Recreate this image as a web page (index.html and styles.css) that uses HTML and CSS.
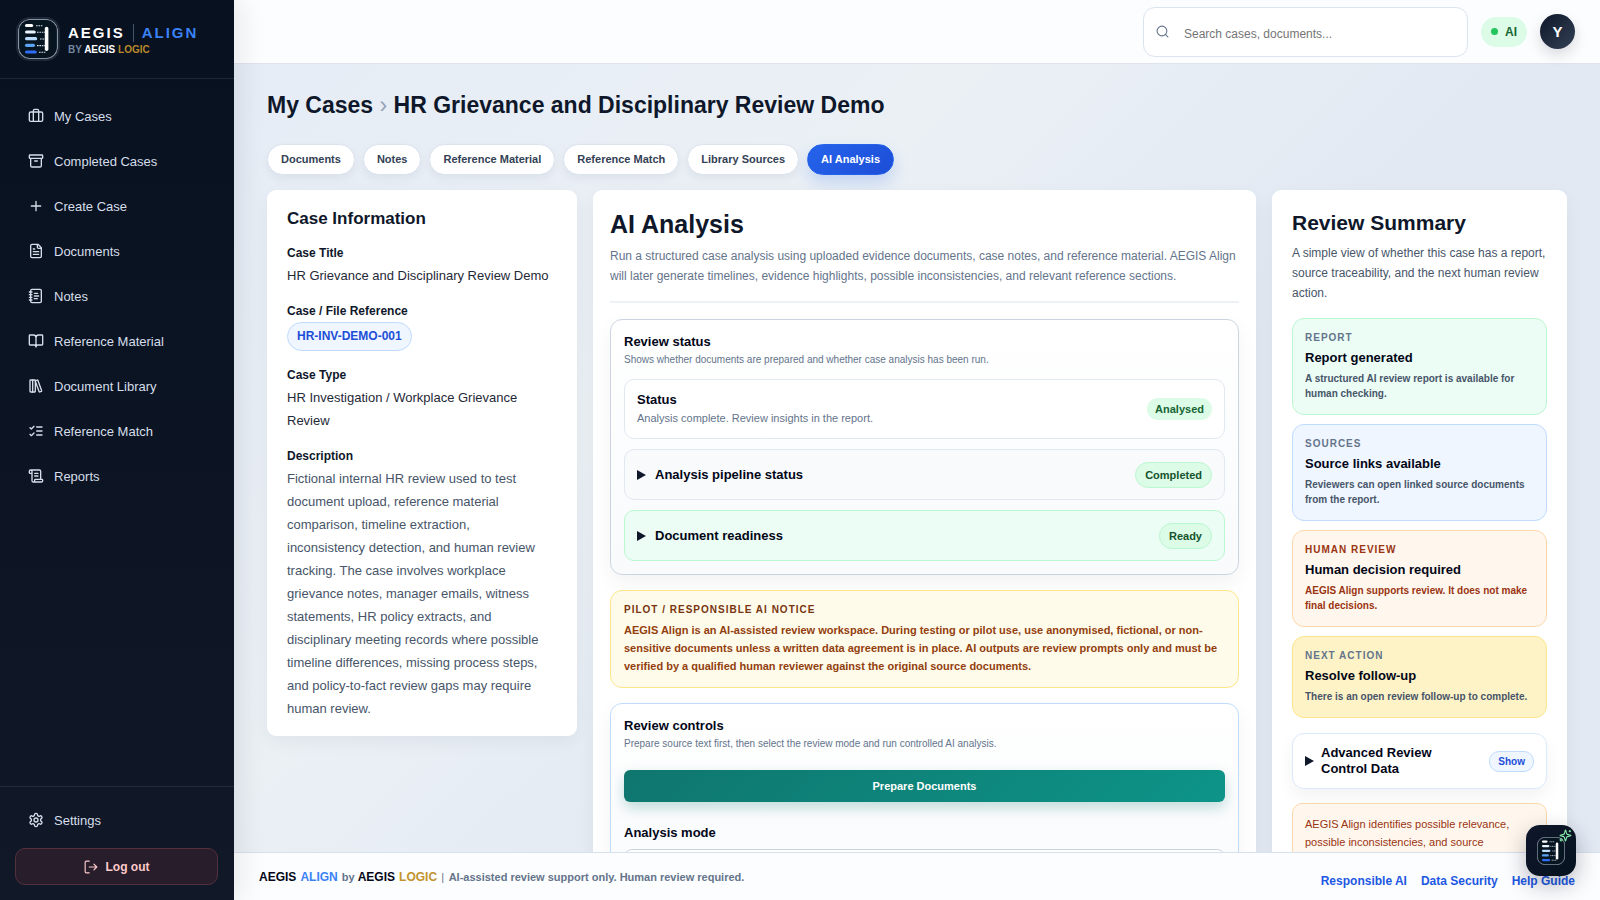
FILE: index.html
```html
<!DOCTYPE html>
<html lang="en">

<head>
    <meta charset="UTF-8">
    <meta name="viewport" content="width=device-width, initial-scale=1.0">
    <title>AEGIS Align</title>
    <link rel="stylesheet" href="styles.css">
</head>

<body>
    <!-- shared symbols -->
    <svg class="symbols" aria-hidden="true">
        <symbol id="logo" viewBox="0 0 40 40">
            <rect x="0.5" y="0.5" width="39" height="39" rx="11" fill="#071521" stroke="#8793a5" stroke-width="1.2" />
            <g stroke-width="3.2" stroke-linecap="round">
                <path d="M8.6 6.5h5" stroke="#fff" />
                <path d="M8.6 13h7.6" stroke="#e8f4ff" />
                <path d="M8.6 19.7h9" stroke="#b9dcff" />
                <path d="M8.6 26.3h6.8" stroke="#5ba4f5" />
                <path d="M8.6 33h8.6" stroke="#2f6df6" />
                <path d="M28.6 9.6v20.6" stroke="#fff" stroke-width="3.6" />
            </g>
            <g stroke="#d5e2f0" stroke-width="1.1" stroke-dasharray="1.6 0.8">
                <path d="M18 6.8h7" />
                <path d="M19 13.3h8" />
                <path d="M22 20h5" />
                <path d="M19 26.6h8" />
                <path d="M21 33.2h7" />
            </g>
        </symbol>
    </svg>

    <aside class="sidebar">
        <div class="brand">
            <svg class="brand-logo"><use href="#logo" /></svg>
            <div>
                <div class="brand-name"><span>AEGIS</span><i></i><b>ALIGN</b></div>
                <div class="brand-by">BY <span>AEGIS</span> <em>LOGIC</em></div>
            </div>
        </div>
        <nav class="nav">
            <a href="#"><svg class="icon" viewBox="0 0 24 24"><path d="M16 20V4a2 2 0 0 0-2-2h-4a2 2 0 0 0-2 2v16" /><rect x="2" y="6" width="20" height="14" rx="2" /></svg>My Cases</a>
            <a href="#"><svg class="icon" viewBox="0 0 24 24"><rect x="2" y="3" width="20" height="5" rx="1" /><path d="M4 8v11a2 2 0 0 0 2 2h12a2 2 0 0 0 2-2V8M10 12h4" /></svg>Completed Cases</a>
            <a href="#"><svg class="icon" viewBox="0 0 24 24"><path d="M5 12h14M12 5v14" /></svg>Create Case</a>
            <a href="#"><svg class="icon" viewBox="0 0 24 24"><path d="M15 2H6a2 2 0 0 0-2 2v16a2 2 0 0 0 2 2h12a2 2 0 0 0 2-2V7ZM14 2v4a2 2 0 0 0 2 2h4M10 9H8M16 13H8M16 17H8" /></svg>Documents</a>
            <a href="#"><svg class="icon" viewBox="0 0 24 24"><path d="M2 6h4M2 10h4M2 14h4M2 18h4M9.500 8h5M9.500 12H16M9.500 16H14" /><rect x="4" y="2" width="16" height="20" rx="2" /></svg>Notes</a>
            <a href="#"><svg class="icon" viewBox="0 0 24 24"><path d="M12 7v14M3 18a1 1 0 0 1-1-1V4a1 1 0 0 1 1-1h5a4 4 0 0 1 4 4 4 4 0 0 1 4-4h5a1 1 0 0 1 1 1v13a1 1 0 0 1-1 1h-6a3 3 0 0 0-3 3 3 3 0 0 0-3-3z" /></svg>Reference Material</a>
            <a href="#"><svg class="icon" viewBox="0 0 24 24"><rect x="3" y="3" width="8" height="18" rx="1" /><path d="M7 3v18M20.400 18.900c.2.5-.1 1.100-.6 1.300l-1.900.7c-.5.2-1.100-.1-1.300-.6L11.100 5.100c-.2-.5.1-1.100.6-1.300l1.900-.7c.5-.2 1.100.1 1.300.6Z" /></svg>Document Library</a>
            <a href="#"><svg class="icon" viewBox="0 0 24 24"><path d="m3 17 2 2 4-4M3 7l2 2 4-4M13 6h8M13 12h8M13 18h8" /></svg>Reference Match</a>
            <a href="#"><svg class="icon" viewBox="0 0 24 24"><path d="M15 12h-5M15 8h-5M19 17V5a2 2 0 0 0-2-2H4M8 21h12a2 2 0 0 0 2-2v-1a1 1 0 0 0-1-1H11a1 1 0 0 0-1 1v1a2 2 0 1 1-4 0V5a2 2 0 1 0-4 0v2a1 1 0 0 0 1 1h3" /></svg>Reports</a>
        </nav>
        <div class="sidebar-bottom">
            <a href="#"><svg class="icon" viewBox="0 0 24 24"><path d="M12.220 2h-.44a2 2 0 0 0-2 2v.18a2 2 0 0 1-1 1.730l-.43.25a2 2 0 0 1-2 0l-.15-.08a2 2 0 0 0-2.730.73l-.22.38a2 2 0 0 0 .73 2.730l.15.1a2 2 0 0 1 1 1.720v.51a2 2 0 0 1-1 1.740l-.15.09a2 2 0 0 0-.73 2.730l.22.38a2 2 0 0 0 2.730.73l.15-.08a2 2 0 0 1 2 0l.43.25a2 2 0 0 1 1 1.730V20a2 2 0 0 0 2 2h.44a2 2 0 0 0 2-2v-.18a2 2 0 0 1 1-1.730l.43-.25a2 2 0 0 1 2 0l.15.08a2 2 0 0 0 2.730-.73l.22-.39a2 2 0 0 0-.73-2.730l-.15-.08a2 2 0 0 1-1-1.740v-.5a2 2 0 0 1 1-1.740l.15-.09a2 2 0 0 0 .73-2.730l-.22-.38a2 2 0 0 0-2.730-.73l-.15.08a2 2 0 0 1-2 0l-.43-.25a2 2 0 0 1-1-1.730V4a2 2 0 0 0-2-2z" /><circle cx="12" cy="12" r="3" /></svg>Settings</a>
            <button class="logout" type="button"><svg class="icon" viewBox="0 0 24 24"><path d="M9 22H4a2 2 0 0 1-2-2V4a2 2 0 0 1 2-2h5M17 17l5-5-5-5M22 12H9" /></svg>Log out</button>
        </div>
    </aside>

    <div class="page">
        <header class="topbar">
            <label class="search">
                <svg class="icon" viewBox="0 0 24 24"><circle cx="11" cy="11" r="9" /><path d="m22 22-4.300-4.300" /></svg>
                <input type="search" placeholder="Search cases, documents..." aria-label="Search">
            </label>
            <span class="ai-pill">AI</span>
            <button class="avatar" type="button">Y</button>
        </header>

        <main class="content">
            <h1>My Cases <span>›</span> HR Grievance and Disciplinary Review Demo</h1>
            <nav class="tabs">
                <a href="#">Documents</a>
                <a href="#">Notes</a>
                <a href="#">Reference Material</a>
                <a href="#">Reference Match</a>
                <a href="#">Library Sources</a>
                <a href="#" class="active">AI Analysis</a>
            </nav>

            <div class="columns">
                <section class="card case-info">
                    <h2>Case Information</h2>
                    <dl>
                        <dt>Case Title</dt>
                        <dd>HR Grievance and Disciplinary Review Demo</dd>
                        <dt>Case / File Reference</dt>
                        <dd><span class="ref">HR-INV-DEMO-001</span></dd>
                        <dt>Case Type</dt>
                        <dd>HR Investigation / Workplace Grievance Review</dd>
                        <dt>Description</dt>
                        <dd class="description">Fictional internal HR review used to test document upload, reference material comparison, timeline extraction, inconsistency detection, and human review tracking. The case involves workplace grievance notes, manager emails, witness statements, HR policy extracts, and disciplinary meeting records where possible timeline differences, missing process steps, and policy-to-fact review gaps may require human review.</dd>
                    </dl>
                </section>

                <section class="card analysis">
                    <div class="analysis-head">
                        <h2>AI Analysis</h2>
                        <p>Run a structured case analysis using uploaded evidence documents, case notes, and reference material. AEGIS Align will later generate timelines, evidence highlights, possible inconsistencies, and relevant reference sections.</p>
                    </div>

                    <div class="panel">
                        <h3>Review status</h3>
                        <p class="hint">Shows whether documents are prepared and whether case analysis has been run.</p>
                        <div class="rows">
                            <div class="row status">
                                <div>
                                    <h3>Status</h3>
                                    <p>Analysis complete. Review insights in the report.</p>
                                </div>
                                <span class="tag plain">Analysed</span>
                            </div>
                            <details>
                                <summary class="row">Analysis pipeline status<span class="tag">Completed</span></summary>
                            </details>
                            <details>
                                <summary class="row ready">Document readiness<span class="tag">Ready</span></summary>
                            </details>
                        </div>
                    </div>

                    <div class="notice">
                        <h4>PILOT / RESPONSIBLE AI NOTICE</h4>
                        <p>AEGIS Align is an AI-assisted review workspace. During testing or pilot use, use anonymised, fictional, or non-sensitive documents unless a written data agreement is in place. AI outputs are review prompts only and must be verified by a qualified human reviewer against the original source documents.</p>
                    </div>

                    <div class="panel controls">
                        <h3>Review controls</h3>
                        <p class="hint">Prepare source text first, then select the review mode and run controlled AI analysis.</p>
                        <button class="prepare" type="button">Prepare Documents</button>
                        <label for="mode">Analysis mode</label>
                        <select id="mode"></select>
                    </div>
                </section>

                <section class="card summary">
                    <h2>Review Summary</h2>
                    <p class="lead">A simple view of whether this case has a report, source traceability, and the next human review action.</p>
                    <div class="tiles">
                        <div class="tile green">
                            <h4>REPORT</h4>
                            <h3>Report generated</h3>
                            <p>A structured AI review report is available for human checking.</p>
                        </div>
                        <div class="tile blue">
                            <h4>SOURCES</h4>
                            <h3>Source links available</h3>
                            <p>Reviewers can open linked source documents from the report.</p>
                        </div>
                        <div class="tile orange">
                            <h4>HUMAN REVIEW</h4>
                            <h3>Human decision required</h3>
                            <p>AEGIS Align supports review. It does not make final decisions.</p>
                        </div>
                        <div class="tile yellow">
                            <h4>NEXT ACTION</h4>
                            <h3>Resolve follow-up</h3>
                            <p>There is an open review follow-up to complete.</p>
                        </div>
                    </div>
                    <details class="advanced">
                        <summary><b>Advanced Review Control Data</b><span>Show</span></summary>
                    </details>
                    <p class="disclaimer">AEGIS Align identifies possible relevance, possible inconsistencies, and source</p>
                </section>
            </div>
        </main>

        <footer class="footer">
            <div><b>AEGIS</b> <b class="align">ALIGN</b> by <b>AEGIS</b> <b class="logic">LOGIC</b> <i>|</i> AI-assisted review support only. Human review required.</div>
            <nav>
                <a href="#">Responsible AI</a>
                <a href="#">Data Security</a>
                <a href="#">Help Guide</a>
            </nav>
        </footer>
    </div>

    <button class="assistant" type="button" aria-label="Assistant">
        <svg class="assistant-logo"><use href="#logo" /></svg>
        <svg class="sparkles" viewBox="0 0 24 24"><path d="M9.940 15.500A2 2 0 0 0 8.500 14.060l-6.140-1.580a.5.5 0 0 1 0-.96L8.500 9.940A2 2 0 0 0 9.940 8.500l1.580-6.140a.5.5 0 0 1 .96 0L14.060 8.500a2 2 0 0 0 1.440 1.440l6.140 1.580a.5.5 0 0 1 0 .96L15.500 14.060a2 2 0 0 0-1.440 1.440l-1.580 6.140a.5.5 0 0 1-.96 0zM20 2v4M22 4h-4" /><circle cx="4" cy="20" r="2" /></svg>
    </button>
</body>

</html>
```

FILE: styles.css
```css
* {
    box-sizing: border-box;
    margin: 0;
    padding: 0;
}

body {
    display: flex;
    height: 100vh;
    overflow: hidden;
    font-family: "Liberation Sans", Arial, sans-serif;
    font-size: 13px;
    color: #0f172a;
}

a {
    text-decoration: none;
    color: inherit;
}

button,
input,
select {
    font-family: inherit;
}

button {
    cursor: pointer;
    border: none;
}

.symbols {
    position: absolute;
    width: 0;
    height: 0;
}

.icon {
    width: 16px;
    height: 16px;
    flex: none;
    fill: none;
    stroke: currentColor;
    stroke-width: 2;
    stroke-linecap: round;
    stroke-linejoin: round;
}

/* sidebar */
.sidebar {
    position: relative;
    z-index: 2;
    display: flex;
    flex-direction: column;
    width: 234px;
    flex: none;
    background: linear-gradient(180deg, #07111f, #111827);
    box-shadow: 8px 0 24px rgba(15, 23, 42, 0.08);
    color: #d5deea;
}

.brand {
    display: flex;
    align-items: center;
    gap: 10px;
    height: 79px;
    padding-left: 18px;
    border-bottom: 1px solid #1d2736;
}

.brand-logo {
    width: 40px;
    height: 40px;
    border-radius: 12px;
    box-shadow: 0 0 0 2px #1d2736;
}

.brand-name {
    display: flex;
    align-items: center;
    gap: 8px;
    padding-top: 2px;
    font-size: 15px;
    line-height: 18px;
    font-weight: 900;
    letter-spacing: 2px;
    color: #fff;
}

.brand-name i {
    width: 1px;
    height: 18px;
    background: #475569;
}

.brand-name b {
    color: #3b82f6;
}

.brand-by {
    font-size: 10px;
    line-height: 15px;
    font-weight: 700;
    color: #7486a0;
}

.brand-by span {
    color: #fff;
}

.brand-by em {
    font-style: normal;
    color: #b8892b;
}

.nav {
    display: flex;
    flex-direction: column;
    gap: 5px;
    flex: 1;
    padding-top: 17px;
}

.nav a,
.sidebar-bottom a {
    display: flex;
    align-items: center;
    gap: 10px;
    height: 40px;
    padding-left: 28px;
}

.sidebar-bottom {
    padding: 13px 0 15px;
    border-top: 1px solid #202a3a;
}

.logout {
    display: flex;
    align-items: center;
    justify-content: center;
    gap: 8px;
    width: calc(100% - 31px);
    height: 37px;
    margin: 8px 0 0 15px;
    border: 1px solid #54303b;
    border-radius: 10px;
    background: #281d2a;
    color: #fecaca;
    font-size: 12px;
    font-weight: 700;
}

.logout .icon {
    width: 14px;
    height: 14px;
}

/* top bar */
.page {
    display: flex;
    flex-direction: column;
    flex: 1;
    min-width: 0;
    background: linear-gradient(135deg, #e6ecf6, #ebf0f5 35%, #e2e9f3 60%, #e2e9f3);
}

.topbar {
    display: flex;
    align-items: center;
    justify-content: flex-end;
    gap: 13px;
    height: 64px;
    flex: none;
    padding-right: 25px;
    background: #fcfdfe;
    border-bottom: 1px solid #dfe4ec;
}

.search {
    display: flex;
    align-items: center;
    gap: 15px;
    width: 325px;
    height: 50px;
    padding: 0 12px;
    background: #fff;
    border: 1px solid #dbe4f0;
    border-radius: 12px;
}

.search .icon {
    width: 13px;
    height: 13px;
    color: #64748b;
}

.search input {
    flex: 1;
    padding-top: 5px;
    border: none;
    outline: none;
    background: none;
    font-size: 12px;
}

.search input::placeholder {
    color: #757575;
}

.ai-pill {
    display: flex;
    align-items: center;
    gap: 7px;
    height: 30px;
    padding: 0 10px;
    border-radius: 15px;
    background: #dcfce7;
    color: #166534;
    font-size: 12px;
    font-weight: 900;
}

.ai-pill::before {
    content: "";
    width: 7px;
    height: 7px;
    border-radius: 50%;
    background: #22c55e;
}

.avatar {
    width: 35px;
    height: 35px;
    border-radius: 50%;
    background: linear-gradient(135deg, #0f172a, #334155);
    box-shadow: 0 6px 14px rgba(15, 23, 42, 0.15);
    color: #fff;
    font-size: 15px;
    font-weight: 900;
}

/* content */
.content {
    flex: 1;
    min-height: 0;
    padding: 26px 33px 0;
    overflow-y: auto;
    scrollbar-width: none;
}

h1 {
    font-size: 23px;
    line-height: 30px;
}

h1 span {
    color: #94a3b8;
    font-weight: 400;
}

.tabs {
    display: flex;
    flex-wrap: wrap;
    gap: 8px;
    margin: 24px 0 15px;
}

.tabs a {
    padding: 0 13px;
    border: 1px solid #dbe3ee;
    border-radius: 16px;
    background: #fff;
    box-shadow: 0 4px 10px rgba(15, 23, 42, 0.05);
    color: #334155;
    font-size: 11px;
    line-height: 29px;
    font-weight: 700;
}

.tabs .active {
    border-color: #2563eb;
    background: linear-gradient(135deg, #2563eb, #1d4ed8);
    box-shadow: 0 8px 16px rgba(37, 99, 235, 0.2);
    color: #fff;
}

.columns {
    display: grid;
    grid-template-columns: 310px minmax(0, 1fr) 295px;
    gap: 16px;
    align-items: start;
}

.card {
    border-radius: 9px;
    background: #fff;
    box-shadow: 0 6px 18px rgba(15, 23, 42, 0.05);
}

/* case information */
.case-info {
    padding: 18px 20px 16px;
}

.case-info h2 {
    font-size: 17px;
    line-height: 22px;
    margin-bottom: 14px;
}

.case-info dt {
    font-size: 12px;
    line-height: 18px;
    font-weight: 700;
    margin-bottom: 2px;
}

.case-info dd {
    margin-bottom: 15px;
    line-height: 23px;
    color: #1f2937;
}

.case-info .description {
    margin: 0;
    padding-right: 12px;
    color: #475569;
}

.ref {
    display: inline-block;
    padding: 0 9px;
    border: 1px solid #bfdbfe;
    border-radius: 15px;
    background: #eff6ff;
    color: #1d4ed8;
    font-size: 12px;
    line-height: 27px;
    font-weight: 900;
}

/* analysis column */
.analysis {
    padding: 19px 17px 17px;
}

.analysis-head {
    padding-bottom: 15px;
    margin-bottom: 16px;
    border-bottom: 2px solid #eef1f6;
}

.analysis-head h2 {
    font-size: 25px;
    line-height: 30px;
    margin-bottom: 7px;
}

.analysis-head p {
    font-size: 12px;
    line-height: 20px;
    color: #64748b;
}

h3 {
    font-size: 13px;
    line-height: 18px;
    font-weight: 900;
    color: #020617;
}

.panel {
    padding: 13px;
    border: 1px solid #cbd5e1;
    border-radius: 12px;
    background: linear-gradient(180deg, #fff, #f8fafc);
    box-shadow: 0 8px 20px rgba(15, 23, 42, 0.05);
}

.hint {
    font-size: 10px;
    line-height: 18px;
    color: #64748b;
}

.rows {
    display: grid;
    gap: 10px;
    margin-top: 10px;
}

.row {
    display: flex;
    align-items: center;
    height: 51px;
    padding: 0 12px;
    border: 1px solid #e2e8f0;
    border-radius: 10px;
    background: #f8fafc;
    color: #020617;
    font-size: 13px;
    font-weight: 900;
}

.status {
    height: 60px;
    background: #fff;
    font-weight: 400;
}

.status p {
    font-size: 11px;
    line-height: 18px;
    color: #64748b;
}

.ready {
    border-color: #bbf7d0;
    background: #ecfdf5;
}

summary {
    cursor: pointer;
    list-style: none;
}

summary::before {
    content: "";
    margin-right: 9px;
    border: solid transparent;
    border-width: 5px 0 5px 9px;
    border-left-color: #0f172a;
}

.tag {
    margin-left: auto;
    padding: 0 9px;
    border: 1px solid #bbf7d0;
    border-radius: 13px;
    background: #dcfce7;
    color: #14532d;
    font-size: 11px;
    line-height: 24px;
    font-weight: 900;
}

.tag.plain {
    padding: 0 8px;
    border: none;
    color: #166534;
    line-height: 22px;
    font-weight: 700;
}

.notice {
    margin: 15px 0;
    padding: 10px 13px 12px;
    border: 1px solid #fde68a;
    border-radius: 12px;
    background: #fffbeb;
    color: #92400e;
}

h4 {
    font-size: 10px;
    line-height: 15px;
    font-weight: 900;
    letter-spacing: 1px;
    color: #64748b;
}

.notice h4 {
    line-height: 18px;
    margin-bottom: 2px;
    color: #78350f;
}

.notice p {
    font-size: 11px;
    line-height: 18px;
    font-weight: 700;
}

.controls {
    border-color: #bfdbfe;
}

.prepare {
    width: 100%;
    height: 32px;
    margin: 17px 0 22px;
    border-radius: 6px;
    background: linear-gradient(135deg, #0f766e, #0d9488);
    box-shadow: 0 6px 14px rgba(15, 118, 110, 0.25);
    color: #fff;
    font-size: 11px;
    font-weight: 700;
}

.controls label {
    display: block;
    line-height: 18px;
    font-weight: 900;
    color: #020617;
}

.controls select {
    width: 100%;
    height: 38px;
    margin-top: 7px;
    border: 1px solid #cbd5e1;
    border-radius: 8px;
    background: #fff;
}

/* review summary */
.summary {
    padding: 20px;
}

.summary h2 {
    font-size: 21px;
    line-height: 26px;
    margin-bottom: 7px;
}

.lead {
    font-size: 12px;
    line-height: 20px;
    color: #475569;
}

.tiles {
    display: grid;
    gap: 9px;
    margin: 15px 0;
}

.tile {
    padding: 11px 12px 13px;
    border: 1px solid;
    border-radius: 12px;
}

.tile h3 {
    margin: 4px 0;
}

.tile p {
    font-size: 10px;
    line-height: 15px;
    font-weight: 700;
    color: #475569;
}

.green {
    border-color: #bbf7d0;
    background: #ecfdf5;
}

.blue {
    border-color: #bfdbfe;
    background: #eff6ff;
}

.orange {
    border-color: #fed7aa;
    background: #fff7ed;
}

.orange h4,
.orange p {
    color: #9a3412;
}

.yellow {
    border-color: #fde68a;
    background: #fef3c7;
}

.advanced {
    border: 1px solid #dbeafe;
    border-radius: 12px;
    background: #fff;
    box-shadow: 0 8px 18px rgba(15, 23, 42, 0.05);
}

.advanced summary {
    display: flex;
    align-items: center;
    padding: 11px 12px;
}

.advanced b {
    max-width: 130px;
    line-height: 16px;
    color: #020617;
}

.advanced summary::before {
    margin-right: 7px;
}

.advanced span {
    margin-left: auto;
    padding: 0 8px;
    border: 1px solid #bfdbfe;
    border-radius: 10px;
    background: #eff6ff;
    color: #1d4ed8;
    font-size: 10px;
    line-height: 19px;
    font-weight: 900;
}

.disclaimer {
    margin-top: 14px;
    padding: 11px 12px 16px;
    border: 1px solid #fed7aa;
    border-radius: 10px;
    background: #fff7ed;
    color: #9a3412;
    font-size: 11px;
    line-height: 18px;
}

/* footer */
.footer {
    display: flex;
    align-items: center;
    justify-content: space-between;
    height: 48px;
    flex: none;
    padding: 0 25px;
    border-top: 1px solid #d8e0ec;
    background: #fcfdfe;
    color: #64748b;
    font-size: 11px;
    font-weight: 700;
}

.footer b {
    margin-right: 1px;
    color: #020617;
    font-size: 12px;
}

.footer .align {
    color: #3b82f6;
}

.footer .logic {
    color: #c2932e;
}

.footer i {
    margin-right: 2px;
    font-style: normal;
    font-weight: 400;
}

.footer nav {
    display: flex;
    gap: 14px;
    padding-top: 8px;
    color: #2057e3;
    font-size: 12px;
    font-weight: 900;
}

.assistant {
    position: fixed;
    z-index: 3;
    right: 24px;
    bottom: 24px;
    display: grid;
    place-items: center;
    width: 50px;
    height: 51px;
    border-radius: 14px;
    background: linear-gradient(135deg, #0f172a, #06121f);
    box-shadow: 0 8px 22px rgba(15, 23, 42, 0.3);
}

.assistant-logo {
    width: 28px;
    height: 28px;
}

.sparkles {
    position: absolute;
    top: 4px;
    right: 4px;
    width: 13px;
    height: 13px;
    fill: none;
    stroke: #86efac;
    stroke-width: 2;
}
```
